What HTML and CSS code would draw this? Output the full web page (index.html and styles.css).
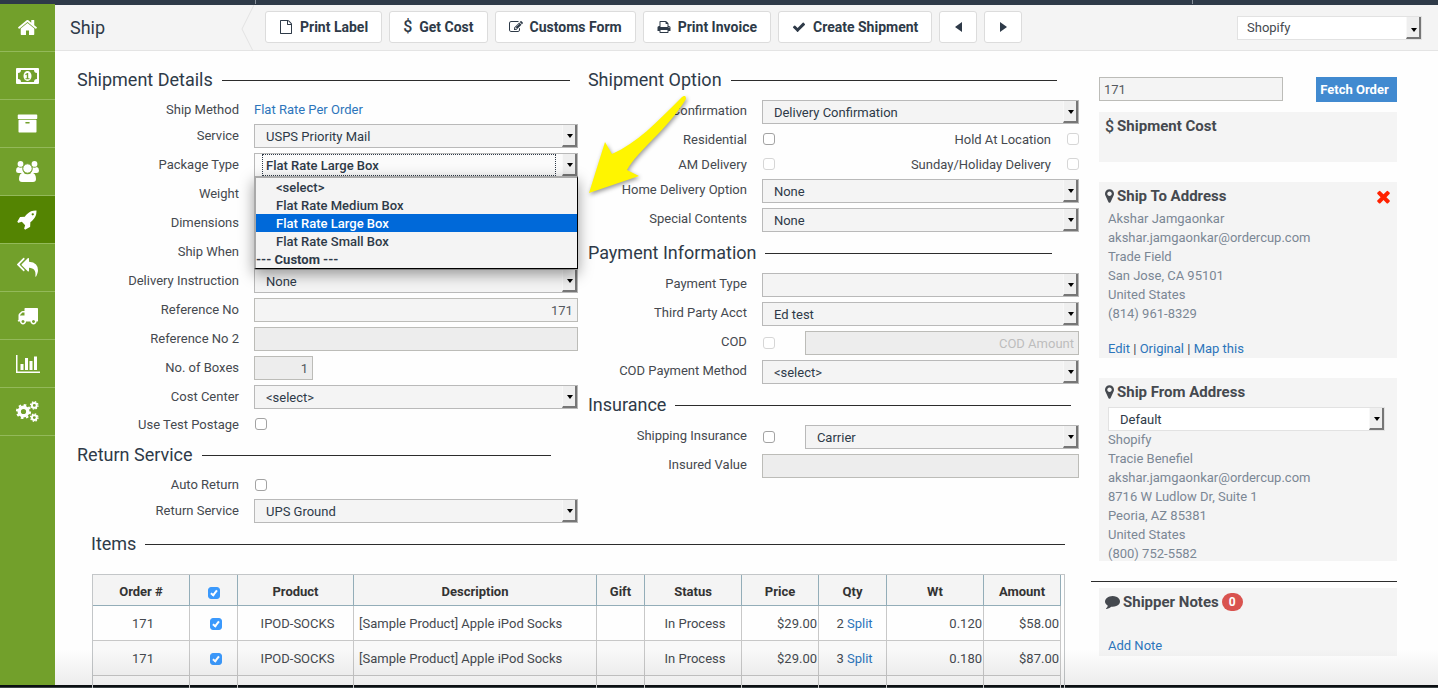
FILE: index.html
```html
<!DOCTYPE html>
<html lang="en">
  <head>
    <meta charset="utf-8" />
    <meta name="viewport" content="width=device-width, initial-scale=1" />
    <title>Ship</title>
    <link rel="stylesheet" href="styles.css">
  </head>
  <body>
    <div class="topbar">
      <span class="topbar-left"></span>
      <span class="topbar-right"></span>
    </div>

    <div class="layout">
      <nav class="sidebar">
        <a href="#" aria-label="Home">
          <svg width="21" height="21" viewBox="0 0 1792 1792"><path d="M1472 992v480q0 26-19 45t-45 19h-384v-384h-256v384h-384q-26 0-45-19t-19-45v-480q0-1 .5-3t.5-3l575-474 575 474q1 2 1 6zm223-69l-62 74q-8 9-21 11h-3q-13 0-21-7l-692-577-692 577q-12 8-24 7-13-2-21-11l-62-74q-8-10-7-23.500t11-21.500l719-599q32-26 76-26t76 26l244 204v-195q0-14 9-23t23-9h192q14 0 23 9t9 23v408l219 182q10 8 11 21.500t-7 23.500z"/></svg>
        </a>
        <a href="#" aria-label="Payments">
          <svg width="23" height="16" viewBox="0 0 23 16"><path fill-rule="evenodd" d="M1 0h21a1 1 0 0 1 1 1v14a1 1 0 0 1-1 1H1a1 1 0 0 1-1-1V1a1 1 0 0 1 1-1zM5 2a3 3 0 0 1-3 3v6a3 3 0 0 1 3 3h13a3 3 0 0 1 3-3V5a3 3 0 0 1-3-3z"/><ellipse cx="11.500" cy="8" rx="4" ry="5"/><path class="cut" d="M9.500 10.200h1.300V6.600l-1.100.7-.5-1 1.900-1.300h1.100v5.200h1.300v1h-4z"/></svg>
        </a>
        <a href="#" aria-label="Orders">
          <svg width="21" height="21" viewBox="0 0 1792 1792"><path d="M1088 832q0-26-19-45t-45-19h-256q-26 0-45 19t-19 45 19 45 45 19h256q26 0 45-19t19-45zm576-192v960q0 26-19 45t-45 19h-1408q-26 0-45-19t-19-45v-960q0-26 19-45t45-19h1408q26 0 45 19t19 45zm64-448v256q0 26-19 45t-45 19h-1536q-26 0-45-19t-19-45v-256q0-26 19-45t45-19h1536q26 0 45 19t19 45z"/></svg>
        </a>
        <a href="#" aria-label="Customers">
          <svg width="23" height="21" viewBox="0 0 23 21"><circle cx="4.500" cy="2.900" r="2.900"/><circle cx="18.500" cy="2.900" r="2.900"/><path d="M2 6q2.500 1.200 4.600.3Q6.300 10 8.200 12H2.500Q0 12 0 9.700 0 6.500 2 6zM21 6q-2.500 1.200-4.600.3.300 3.700-1.600 5.700h5.700Q23 12 23 9.700 23 6.500 21 6z"/><circle class="ring" cx="11.500" cy="7.500" r="4.700"/><path d="M7.300 11.800q4.200 3 8.400 0 4.300.5 4.300 6.200 0 3-3 3H6q-3 0-3-3 0-5.700 4.300-6.200z"/></svg>
        </a>
        <a href="#" class="active" aria-label="Ship">
          <svg width="21" height="21" viewBox="0 0 1792 1792"><path d="M1440 448q0-40-28-68t-68-28-68 28-28 68 28 68 68 28 68-28 28-68zm224-288q0 249-75.500 430.500t-253.500 360.500q-81 80-195 176l-20 379q-2 16-16 26l-384 224q-7 4-16 4-12 0-23-9l-64-64q-13-14-8-32l85-276-281-281-276 85q-3 1-9 1-14 0-23-9l-64-64q-17-19-5-39l224-384q10-14 26-16l379-20q96-114 176-195 188-187 358-258t431-71q14 0 24 9.500t10 22.500z"/></svg>
        </a>
        <a href="#" aria-label="Returns">
          <svg width="21" height="21" viewBox="0 0 1792 1792"><path d="M640 1082v70q0 42-39 59-13 5-25 5-27 0-45-19l-512-512q-19-19-19-45t19-45l512-512q29-31 70-14 39 17 39 59v69l-397 398q-19 19-19 45t19 45zm1152 58q0 58-17 133.500t-38.500 138-48 125-40.500 90.500l-20 40q-8 17-28 17-6 0-9-1-25-8-23-34 43-400-106-565-64-71-170.500-110.500t-267.500-52.500v251q0 42-39 59-13 5-25 5-27 0-45-19l-512-512q-19-19-19-45t19-45l512-512q29-31 70-14 39 17 39 59v262q411 28 599 221 169 173 169 509z"/></svg>
        </a>
        <a href="#" aria-label="Deliveries">
          <svg width="21" height="21" viewBox="0 0 1792 1792"><path d="M640 1408q0-52-38-90t-90-38-90 38-38 90 38 90 90 38 90-38 38-90zm-384-512h384v-256h-158q-13 0-22 9l-195 195q-9 9-9 22v30zm1280 512q0-52-38-90t-90-38-90 38-38 90 38 90 90 38 90-38 38-90zm256-1088v1024q0 15-4 26.500t-13.500 18.500-16.500 11.500-23.500 6-22.500 2-25.500 0-22.500-.5q0 106-75 181t-181 75-181-75-75-181h-384q0 106-75 181t-181 75-181-75-75-181h-64q-3 0-22.500.5t-25.500 0-22.500-2-23.500-6-16.500-11.500-13.500-18.500-4-26.500q0-26 19-45t45-19v-320q0-8-.5-35t0-38 2.500-34.500 6.500-37 14-30.500 22.500-30l198-198q19-19 50.500-32t58.500-13h160v-192q0-26 19-45t45-19h1024q26 0 45 19t19 45z"/></svg>
        </a>
        <a href="#" aria-label="Reports">
          <svg width="24" height="18" viewBox="0 0 24 18"><path d="M0 0h1.500v16.500H24V18H0zM4.500 9h3v6h-3zM9 3h3v12H9zM13.500 6h3v9h-3zM18 1.500h3V15h-3z"/></svg>
        </a>
        <a href="#" aria-label="Settings">
          <svg width="23" height="21" viewBox="0 0 23 21"><g class="gear"><circle cx="7.500" cy="10.500" r="4.300" stroke-width="3.400"/><circle cx="7.500" cy="10.500" r="6.600" stroke-width="2" stroke-dasharray="2.600 2.584"/><circle cx="18.300" cy="4.400" r="2.400" stroke-width="1.900"/><circle cx="18.300" cy="4.400" r="3.700" stroke-width="1.300" stroke-dasharray="1.500 1.406"/><circle cx="18.300" cy="16.600" r="2.400" stroke-width="1.900"/><circle cx="18.300" cy="16.600" r="3.700" stroke-width="1.300" stroke-dasharray="1.500 1.406"/></g></svg>
        </a>
      </nav>

      <div class="page">
        <header class="header">
          <h1>Ship</h1>
          <svg class="chevron" width="13" height="46" viewBox="0 0 13 46"><path d="M13 0 1 24l11 22"/></svg>
          <div class="toolbar">
            <button type="button">
              <svg width="14" height="14" viewBox="0 0 1792 1792"><path d="M1596 380q28 28 48 76t20 88v1152q0 40-28 68t-68 28h-1344q-40 0-68-28t-28-68v-1600q0-40 28-68t68-28h896q40 0 88 20t76 48zm-444-244v376h376q-10-29-22-41l-313-313q-12-12-41-22zm384 1528v-1024h-416q-40 0-68-28t-28-68v-416h-768v1536h1280z"/></svg>
              Print Label
            </button>
            <button type="button"><span class="dollar">$</span>Get Cost</button>
            <button type="button">
              <svg width="14" height="14" viewBox="0 0 1792 1792"><path d="M888 1184l116-116-152-152-116 116v56h96v96h56zm440-720q-16-16-33 1l-350 350q-17 17-1 33t33-1l350-350q17-17 1-33zm80 594v190q0 119-84.500 203.500t-203.500 84.500h-832q-119 0-203.500-84.500t-84.500-203.500v-832q0-119 84.500-203.500t203.500-84.500h832q63 0 117 25 15 7 18 23 3 17-9 29l-49 49q-14 14-32 8-23-6-45-6h-832q-66 0-113 47t-47 113v832q0 66 47 113t113 47h832q66 0 113-47t47-113v-126q0-13 9-22l64-64q15-15 35-7t20 29zm-96-738l288 288-672 672h-288v-288zm444 132l-92 92-288-288 92-92q28-28 68-28t68 28l152 152q28 28 28 68t-28 68z"/></svg>
              Customs Form
            </button>
            <button type="button">
              <svg width="14" height="14" viewBox="0 0 1792 1792"><path d="M448 1536h896v-256h-896v256zm0-640h896v-384h-160q-40 0-68-28t-28-68v-160h-640v640zm1152 64q0-26-19-45t-45-19-45 19-19 45 19 45 45 19 45-19 19-45zm128 0v416q0 13-9.500 22.500t-22.500 9.500h-224v160q0 40-28 68t-68 28h-960q-40 0-68-28t-28-68v-160h-224q-13 0-22.500-9.500t-9.500-22.500v-416q0-79 56.500-135.500t135.500-56.500h64v-544q0-40 28-68t68-28h672q40 0 88 20t76 48l152 152q28 28 48 76t20 88v256h64q79 0 135.500 56.500t56.500 135.500z"/></svg>
              Print Invoice
            </button>
            <button type="button">
              <svg width="14" height="14" viewBox="0 0 1792 1792"><path d="M1671 566q0 40-28 68l-724 724-136 136q-28 28-68 28t-68-28l-136-136-362-362q-28-28-28-68t28-68l136-136q28-28 68-28t68 28l294 295 656-657q28-28 68-28t68 28l136 136q28 28 28 68z"/></svg>
              Create Shipment
            </button>
            <button type="button" class="step" aria-label="Previous">
              <svg width="7" height="12" viewBox="0 0 7 12"><path d="M7 1v10L0 6z"/></svg>
            </button>
            <button type="button" class="step" aria-label="Next">
              <svg width="7" height="12" viewBox="0 0 7 12"><path d="M0 1v10l7-5z"/></svg>
            </button>
          </div>
          <div class="select light store">
            <select aria-label="Store"><option>Shopify</option></select>
          </div>
        </header>

        <main class="content">
          <div class="left">
            <div class="forms">
              <section class="form-col">
                <h2 class="trim-sm">Shipment Details</h2>
                <div class="row slim">
                  <span class="label">Ship Method</span>
                  <div class="field"><a href="#">Flat Rate Per Order</a></div>
                </div>
                <div class="row">
                  <label class="label" for="service">Service</label>
                  <div class="select"><select id="service"><option>USPS Priority Mail</option></select></div>
                </div>
                <div class="row">
                  <label class="label" for="package">Package Type</label>
                  <div class="select open">
                    <select id="package"><option>Flat Rate Large Box</option></select>
                    <span class="focus-ring"></span>
                    <ul class="menu" role="listbox" aria-label="Package types">
                      <li role="option">&lt;select&gt;</li>
                      <li role="option">Flat Rate Medium Box</li>
                      <li role="option" class="selected" aria-selected="true">Flat Rate Large Box</li>
                      <li role="option">Flat Rate Small Box</li>
                      <li class="group">--- Custom ---</li>
                    </ul>
                  </div>
                </div>
                <div class="row">
                  <label class="label" for="weight">Weight</label>
                  <input type="text" id="weight">
                </div>
                <div class="row">
                  <label class="label" for="dimensions">Dimensions</label>
                  <input type="text" id="dimensions">
                </div>
                <div class="row">
                  <label class="label" for="when">Ship When</label>
                  <input type="text" id="when">
                </div>
                <div class="row">
                  <label class="label" for="instruction">Delivery Instruction</label>
                  <div class="select"><select id="instruction"><option>None</option></select></div>
                </div>
                <div class="row">
                  <label class="label" for="ref1">Reference No</label>
                  <input type="text" id="ref1" value="171">
                </div>
                <div class="row">
                  <label class="label" for="ref2">Reference No 2</label>
                  <input type="text" id="ref2" class="dim">
                </div>
                <div class="row">
                  <label class="label" for="boxes">No. of Boxes</label>
                  <input type="text" id="boxes" class="dim short" value="1">
                </div>
                <div class="row">
                  <label class="label" for="cost-center">Cost Center</label>
                  <div class="select"><select id="cost-center"><option>&lt;select&gt;</option></select></div>
                </div>
                <div class="row check">
                  <label class="label" for="test-postage">Use Test Postage</label>
                  <div class="field"><input type="checkbox" id="test-postage"></div>
                </div>

                <h2 class="trim-lg">Return Service</h2>
                <div class="row slim">
                  <label class="label" for="auto-return">Auto Return</label>
                  <div class="field"><input type="checkbox" id="auto-return"></div>
                </div>
                <div class="row">
                  <label class="label" for="return-service">Return Service</label>
                  <div class="select"><select id="return-service"><option>UPS Ground</option></select></div>
                </div>
              </section>

              <section class="form-col options">
                <h2 class="trim-md">Shipment Option</h2>
                <div class="row">
                  <label class="label" for="confirmation">Confirmation</label>
                  <div class="select"><select id="confirmation"><option>Delivery Confirmation</option></select></div>
                </div>
                <div class="row check">
                  <label class="label" for="residential">Residential</label>
                  <div class="field">
                    <input type="checkbox" id="residential">
                    <label class="second" for="hold">Hold At Location</label>
                    <input type="checkbox" id="hold" disabled>
                  </div>
                </div>
                <div class="row check">
                  <label class="label" for="am">AM Delivery</label>
                  <div class="field">
                    <input type="checkbox" id="am" disabled>
                    <label class="second" for="sunday">Sunday/Holiday Delivery</label>
                    <input type="checkbox" id="sunday" disabled>
                  </div>
                </div>
                <div class="row">
                  <label class="label" for="home-delivery">Home Delivery Option</label>
                  <div class="select"><select id="home-delivery"><option>None</option></select></div>
                </div>
                <div class="row">
                  <label class="label" for="special">Special Contents</label>
                  <div class="select"><select id="special"><option>None</option></select></div>
                </div>

                <h2 class="trim-lg">Payment Information</h2>
                <div class="row">
                  <label class="label" for="payment-type">Payment Type</label>
                  <div class="select"><select id="payment-type"><option></option></select></div>
                </div>
                <div class="row">
                  <label class="label" for="third-party">Third Party Acct</label>
                  <div class="select"><select id="third-party"><option>Ed test</option></select></div>
                </div>
                <div class="row">
                  <label class="label" for="cod">COD</label>
                  <div class="field split">
                    <input type="checkbox" id="cod" disabled>
                    <input type="text" class="dim" placeholder="COD Amount" aria-label="COD Amount">
                  </div>
                </div>
                <div class="row">
                  <label class="label" for="cod-method">COD Payment Method</label>
                  <div class="select"><select id="cod-method"><option>&lt;select&gt;</option></select></div>
                </div>

                <h2 class="trim-sm">Insurance</h2>
                <div class="row">
                  <label class="label" for="insurance">Shipping Insurance</label>
                  <div class="field split">
                    <input type="checkbox" id="insurance">
                    <div class="select"><select aria-label="Insurance provider"><option>Carrier</option></select></div>
                  </div>
                </div>
                <div class="row">
                  <label class="label" for="insured">Insured Value</label>
                  <input type="text" id="insured" class="dim">
                </div>

                <svg class="pointer" width="104" height="104" viewBox="0 0 104 104"><path d="M1 97 17 46l7 12C49 47 68 27 94 1q4-3 4 2C80 33 50 54 39 74l12 6z"/></svg>
              </section>
            </div>

            <section class="items">
              <h2>Items</h2>
              <div class="table-wrap">
                <table>
                  <colgroup>
                    <col style="width: 97px"><col style="width: 48px"><col style="width: 116px"><col style="width: 243px"><col style="width: 48px"><col style="width: 97px"><col style="width: 77px"><col style="width: 68px"><col style="width: 97px"><col style="width: 77px">
                  </colgroup>
                  <thead>
                    <tr>
                      <th>Order #</th>
                      <th><input type="checkbox" aria-label="Select all" checked></th>
                      <th>Product</th>
                      <th>Description</th>
                      <th>Gift</th>
                      <th>Status</th>
                      <th>Price</th>
                      <th>Qty</th>
                      <th>Wt</th>
                      <th>Amount</th>
                    </tr>
                  </thead>
                  <tbody>
                    <tr>
                      <td>171</td>
                      <td><input type="checkbox" aria-label="Select item 1" checked></td>
                      <td>IPOD-SOCKS</td>
                      <td class="text">[Sample Product] Apple iPod Socks</td>
                      <td></td>
                      <td>In Process</td>
                      <td class="num">$29.00</td>
                      <td>2 <a href="#">Split</a></td>
                      <td class="num">0.120</td>
                      <td class="num">$58.00</td>
                    </tr>
                    <tr>
                      <td>171</td>
                      <td><input type="checkbox" aria-label="Select item 2" checked></td>
                      <td>IPOD-SOCKS</td>
                      <td class="text">[Sample Product] Apple iPod Socks</td>
                      <td></td>
                      <td>In Process</td>
                      <td class="num">$29.00</td>
                      <td>3 <a href="#">Split</a></td>
                      <td class="num">0.180</td>
                      <td class="num">$87.00</td>
                    </tr>
                    <tr>
                      <td></td><td></td><td></td><td></td><td></td><td></td><td></td><td></td><td></td><td></td>
                    </tr>
                  </tbody>
                </table>
              </div>
            </section>
          </div>

          <aside class="side">
            <form class="fetch">
              <input type="text" value="171" aria-label="Order number">
              <button type="button">Fetch Order</button>
            </form>
            <section class="panel cost">
              <h3><span class="dollar">$</span>Shipment Cost</h3>
            </section>
            <section class="panel ship-to">
              <h3>
                <svg width="9" height="14" viewBox="384 100 1024 1592"><path d="M1152 640q0-106-75-181t-181-75-181 75-75 181 75 181 181 75 181-75 75-181zm256 0q0 109-33 179l-364 774q-16 33-47.500 52t-67.500 19-67.500-19-46.500-52l-365-774q-33-70-33-179 0-212 150-362t362-150 362 150 150 362z"/></svg>
                Ship To Address
                <button type="button" class="remove" aria-label="Remove address">
                  <svg width="15" height="15" viewBox="190 190 1412 1412"><path d="M1490 1322q0 40-28 68l-136 136q-28 28-68 28t-68-28l-294-294-294 294q-28 28-68 28t-68-28l-136-136q-28-28-28-68t28-68l294-294-294-294q-28-28-28-68t28-68l136-136q28-28 68-28t68 28l294 294 294-294q28-28 68-28t68 28l136 136q28 28 28 68t-28 68l-294 294 294 294q28 28 28 68z"/></svg>
                </button>
              </h3>
              <address>
                Akshar Jamgaonkar<br>
                akshar.jamgaonkar@ordercup.com<br>
                Trade Field<br>
                San Jose, CA 95101<br>
                United States<br>
                (814) 961-8329
              </address>
              <p class="links"><a href="#">Edit</a> | <a href="#">Original</a> | <a href="#">Map this</a></p>
            </section>
            <section class="panel ship-from">
              <h3>
                <svg width="9" height="14" viewBox="384 100 1024 1592"><path d="M1152 640q0-106-75-181t-181-75-181 75-75 181 75 181 181 75 181-75 75-181zm256 0q0 109-33 179l-364 774q-16 33-47.500 52t-67.500 19-67.500-19-46.500-52l-365-774q-33-70-33-179 0-212 150-362t362-150 362 150 150 362z"/></svg>
                Ship From Address
              </h3>
              <div class="select light"><select aria-label="Ship from"><option>Default</option></select></div>
              <address>
                Shopify<br>
                Tracie Benefiel<br>
                akshar.jamgaonkar@ordercup.com<br>
                8716 W Ludlow Dr, Suite 1<br>
                Peoria, AZ 85381<br>
                United States<br>
                (800) 752-5582
              </address>
            </section>
            <hr>
            <section class="panel notes">
              <h3>
                <svg width="15" height="14" viewBox="0 128 1792 1664"><path d="M1792 896q0 174-120 321.500t-326 233-450 85.500q-70 0-145-8-198 175-460 242-49 14-114 22-17 2-30.500-9t-17.500-29v-1q-3-4-.5-12t2-10 4.500-9.500l6-9 7-8.500 8-9q7-8 31-34.500t34.500-38 31-39.500 32.500-51 27-59 26-76q-157-89-247.500-220t-90.500-281q0-130 71-248.500t191-204.500 286-136.500 348-50.500q244 0 450 85.500t326 233 120 321.500z"/></svg>
                Shipper Notes
                <span class="badge">0</span>
              </h3>
              <p class="links"><a href="#">Add Note</a></p>
            </section>
          </aside>
        </main>
      </div>
    </div>

    <div class="bottombar"></div>
  </body>
</html>
```
FILE: styles.css
```css
*,
*::before,
*::after {
  box-sizing: border-box;
}

body {
  margin: 0;
  height: 100vh;
  display: flex;
  flex-direction: column;
  overflow: hidden;
  font-family: Roboto, "Liberation Sans", sans-serif;
  font-size: 13px;
  color: #45494f;
  background-color: #fefefe;
}

a {
  color: #2c75bb;
  text-decoration: none;
}

svg {
  fill: currentColor;
  flex: none;
}

h1,
h2,
h3,
p,
ul {
  margin: 0;
  padding: 0;
  font-weight: 400;
}

button,
input,
select {
  font: inherit;
  margin: 0;
}

/* window edges */
.topbar {
  flex: none;
  height: 4px;
  display: flex;
  justify-content: space-between;
  background-color: #2e3a48;
}

.topbar-left {
  width: 256px;
  border-right: 1px solid #87909a;
}

.topbar-right {
  width: 246px;
  border-left: 1px solid #87909a;
}

.bottombar {
  flex: none;
  height: 3px;
  background-color: #0b0f12;
  border-bottom: 1px solid #3c4446;
}

.layout {
  flex: 1;
  min-height: 0;
  display: flex;
}

/* sidebar */
.sidebar {
  flex: none;
  width: 55px;
  background-color: #72a02b;
}

.sidebar a {
  display: flex;
  align-items: center;
  justify-content: center;
  height: 48px;
  color: #fff;
  border-bottom: 1px solid #93b95a;
}

.sidebar .active {
  background-color: #548402;
}

.cut {
  fill: #72a02b;
}

.ring {
  stroke: #72a02b;
}

.gear {
  fill: none;
  stroke: #fff;
}

.page {
  flex: 1;
  min-width: 0;
  position: relative;
}

.page::after {
  content: "";
  position: absolute;
  left: 0;
  right: 0;
  bottom: 0;
  height: 36px;
  background-image: linear-gradient(transparent, rgba(0, 0, 0, 0.07));
  pointer-events: none;
}

/* header */
.header {
  display: flex;
  align-items: center;
  height: 47px;
  padding: 0 16px 0 15px;
  background-color: #f4f4f4;
  border-top: 1px solid #2e3a48;
  border-bottom: 1px solid #e4e4e4;
}

.header h1 {
  width: 171px;
  font-size: 18px;
  color: #2e3a48;
}

.chevron {
  fill: none;
  stroke: #e2e2e2;
}

.toolbar {
  display: flex;
  gap: 7px;
  margin: 0 0 2px 11px;
}

.toolbar button {
  display: flex;
  align-items: center;
  gap: 7px;
  height: 32px;
  padding: 0 13px;
  font-size: 14px;
  font-weight: 700;
  white-space: nowrap;
  color: #2e3a48;
  background-color: #fff;
  border: 1px solid #dcdcdc;
  border-radius: 3px;
}

.toolbar .step {
  width: 38px;
  padding: 0;
  justify-content: center;
}

.dollar {
  font-size: 16px;
  font-weight: 500;
}

.store {
  flex: none;
  width: 185px;
  height: 28px;
  margin-left: auto;
}

/* form controls */
input[type="text"] {
  width: 100%;
  height: 24px;
  padding: 0 4px;
  color: #55595f;
  text-align: right;
  background-color: #f4f4f4;
  border: 1px solid #bcbcb8;
  border-radius: 0;
}

input[type="text"].dim {
  background-color: #ededed;
}

input[type="text"].short {
  width: 59px;
}

input::placeholder {
  color: #bdbdbd;
}

input[type="checkbox"] {
  appearance: none;
  flex: none;
  width: 12px;
  height: 12px;
  background-color: #fff;
  border: 1px solid #a3a3a3;
  border-radius: 3px;
}

input[type="checkbox"]:disabled {
  border-color: #d6d6d6;
}

input[type="checkbox"]:checked {
  position: relative;
  vertical-align: middle;
  background-color: #3b99fc;
  border-color: #3b99fc;
}

input[type="checkbox"]:checked::after {
  content: "";
  position: absolute;
  left: 3px;
  top: 1px;
  width: 4px;
  height: 7px;
  border: solid #fff;
  border-width: 0 2px 2px 0;
  transform: rotate(38deg);
}

.select {
  position: relative;
  height: 24px;
}

.select select {
  appearance: none;
  display: block;
  width: 100%;
  height: 100%;
  padding: 0 18px 0 11px;
  color: #2e3a48;
  background-color: #f4f4f4;
  border: 1px solid #b9b9b9;
  border-radius: 0;
  outline: 0;
}

.select::before {
  content: "";
  position: absolute;
  top: 1px;
  right: 1px;
  bottom: 1px;
  width: 15px;
  background-color: #efefef;
  border: solid #767676;
  border-width: 0 2px 2px 0;
  border-left: 1px solid #f8f8f8;
  pointer-events: none;
}

.select::after {
  content: "";
  position: absolute;
  top: 10px;
  right: 5px;
  border: 3px solid transparent;
  border-top: 4px solid #000;
  border-bottom: 0;
  pointer-events: none;
}

.light select {
  background-color: #fff;
  border-color: #e2e2e2;
}

.header .select select {
  padding-left: 9px;
  color: #45494f;
}

.header .select::after {
  top: 12px;
}

/* open drop-down */
.open select {
  font-weight: 500;
  background-color: #fbfbfb;
}

.focus-ring {
  position: absolute;
  top: 1px;
  right: 22px;
  bottom: 1px;
  left: 8px;
  border: 1px dotted #2e3a48;
  pointer-events: none;
}

.menu {
  position: absolute;
  z-index: 2;
  top: 23px;
  left: 0;
  width: 100%;
  list-style: none;
  font-weight: 500;
  line-height: 18px;
  color: #2e3a48;
  background-color: #f4f4f4;
  border: solid #a9a9a9;
  border-width: 2px 1px 1px 2px;
  border-right-color: #000;
  border-bottom-color: #000;
  box-shadow: 0 5px 14px rgba(0, 0, 0, 0.4);
}

.menu li {
  height: 18px;
  padding: 1px 0 0 20px;
}

.menu .selected {
  color: #fff;
  background-color: #0069d9;
}

.menu .group {
  padding-left: 0;
  font-weight: 700;
}

/* page body */
.content {
  display: grid;
  grid-template-columns: minmax(0, 1fr) 306px;
  gap: 12px;
  padding: 17px 41px 0 22px;
}

.forms {
  display: grid;
  grid-template-columns: minmax(0, 51fr) minmax(0, 50fr);
  gap: 10px;
}

.form-col {
  display: flex;
  flex-direction: column;
  gap: 5px;
  position: relative;
}

h2 {
  display: flex;
  align-items: center;
  gap: 9px;
  margin: 4px 0 3px;
  font-size: 18px;
  line-height: 24px;
  white-space: nowrap;
  color: #2e3a48;
}

h2:first-child {
  margin-top: 0;
}

h2::after {
  content: "";
  flex: 1;
  height: 1px;
  background-color: #2c2c2c;
}

.trim-sm {
  padding-right: 8px;
}

.trim-md {
  padding-right: 22px;
}

.trim-lg {
  padding-right: 27px;
}

.row {
  display: grid;
  grid-template-columns: 162px minmax(0, 1fr);
  column-gap: 15px;
  align-items: center;
  height: 24px;
}

.options .row {
  grid-template-columns: 159px minmax(0, 1fr);
}

.row.check {
  height: 20px;
}

.row.slim {
  height: 19px;
}

.label {
  text-align: right;
  padding-bottom: 1px;
}

.options .label {
  padding-bottom: 3px;
}

.row.slim .label,
.row.check .label {
  padding-bottom: 0;
}

.field {
  display: flex;
  align-items: center;
}

.field input[type="checkbox"]:first-child {
  margin-left: 1px;
}

.second {
  margin: 0 16px 0 auto;
}

.split {
  gap: 30px;
}

.split .select,
.split input[type="text"] {
  flex: 1;
}

.pointer {
  position: absolute;
  z-index: 3;
  top: 28px;
  left: 0;
  fill: #fff500;
  filter: drop-shadow(1px 2px 2px rgba(0, 0, 0, 0.4));
  pointer-events: none;
}

/* items table */
.items {
  margin: 9px 14px 0;
}

.table-wrap {
  margin: 18px 0 0 1px;
  padding-right: 3px;
  border: 1px solid #c3c6c8;
}

table {
  width: 100%;
  table-layout: fixed;
  border-collapse: separate;
  border-spacing: 0;
}

th {
  height: 31px;
  padding: 3px 0 0;
  font-weight: 700;
  color: #333;
  background-color: #f4f4f4;
  border-right: 1px solid #93adb8;
  border-bottom: 1px solid #93adb8;
}

td {
  height: 35px;
  padding: 0 0 0 4px;
  text-align: center;
  border-right: 1px solid #c8c8c8;
  border-bottom: 1px solid #c8c8c8;
}

tr:nth-child(even) td {
  background-color: #f9f9f9;
}

td.text {
  padding-left: 5px;
  text-align: left;
}

td.num {
  padding-right: 1px;
  text-align: right;
}

/* right column */
.side {
  padding: 9px 0 0 8px;
}

.fetch {
  display: flex;
  justify-content: space-between;
}

.fetch input[type="text"] {
  width: 184px;
  text-align: left;
}

.fetch button {
  width: 81px;
  height: 25px;
  padding: 0 4px 0 0;
  font-weight: 700;
  color: #fff;
  background-color: #418ad0;
  border: 0;
}

.panel {
  padding: 4px 6px 0;
  background-color: #f4f4f4;
}

.panel h3 {
  display: flex;
  align-items: center;
  gap: 3px;
  height: 20px;
  font-size: 15px;
  font-weight: 700;
  color: #45494f;
}

.cost {
  height: 50px;
  margin: 10px 0 20px;
}

address {
  padding-left: 3px;
  font-style: normal;
  line-height: 19px;
  color: #7b8794;
}

.links {
  padding-left: 3px;
  line-height: 18px;
}

.ship-to address {
  margin: 3px 0 17px;
}

.remove {
  display: flex;
  margin-left: auto;
  padding: 0;
  color: #ff2200;
  background: none;
  border: 0;
}

.ship-from {
  height: 183px;
  margin-top: 20px;
}

.ship-from .select {
  margin: 5px 6px 0 3px;
}

.ship-from address {
  margin-top: -1px;
}

hr {
  margin: 20px 0 6px -8px;
  border: 0;
  border-top: 1px solid #2c2c2c;
}

.notes {
  padding-bottom: 1px;
}

.notes .links {
  margin-top: 25px;
}

.badge {
  padding: 0 7px;
  font-size: 12px;
  line-height: 18px;
  color: #fff;
  background-color: #d9534f;
  border-radius: 10px;
}
```
